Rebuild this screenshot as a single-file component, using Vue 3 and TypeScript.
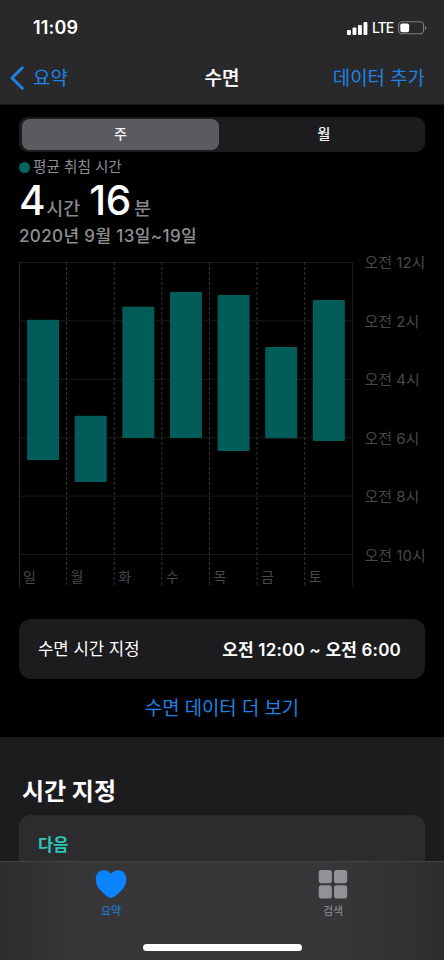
<script setup lang="ts">
interface SleepBar {
  day: string
  top: number
  bottom: number
}

const PITCH = 47.62
const ROW = 58.4

const bars: SleepBar[] = [
  { day: '일', top: 57.7, bottom: 198 },
  { day: '월', top: 153.7, bottom: 220 },
  { day: '화', top: 44.8, bottom: 176 },
  { day: '수', top: 30, bottom: 176 },
  { day: '목', top: 33, bottom: 189 },
  { day: '금', top: 85, bottom: 176.3 },
  { day: '토', top: 38, bottom: 179 },
]

const hours: string[] = ['12', '2', '4', '6', '8', '10']
const dividers: number[] = [1, 2, 3, 4, 5, 6]
const signal: number[] = [5, 7.5, 10, 13]
</script>

<template>
  <div class="screen">
    <header class="header">
      <div class="status">
        <span class="clock">11:09</span>
        <div class="indicators">
          <svg class="signal" viewBox="0 0 21 13">
            <rect v-for="(h, i) in signal" :key="i" :x="i * 5.5" :y="13 - h" width="3.9" :height="h" rx="1" />
          </svg>
          <span class="network">LTE</span>
          <svg class="battery" viewBox="0 0 30 14">
            <rect x="0.6" y="0.8" width="25" height="12" rx="3.6" class="battery-shell" />
            <rect x="2.3" y="2.5" width="8.8" height="8.8" rx="1.8" class="battery-level" />
            <path d="M27 4.7 C28.9 5.5 28.9 8.1 27 8.9 Z" class="battery-cap" />
          </svg>
        </div>
      </div>
      <nav class="nav">
        <a class="back">
          <svg class="chevron" viewBox="0 0 14 24"><path d="M12.3 1.8 L2 12 L12.3 22.2" /></svg>
          <span>요약</span>
        </a>
        <h1 class="nav-title">수면</h1>
        <a class="add">데이터 추가</a>
      </nav>
    </header>

    <main class="content">
      <div class="segments">
        <button class="segment selected">주</button>
        <button class="segment">월</button>
      </div>

      <section class="summary">
        <div class="legend"><i class="dot"></i><span>평균 취침 시간</span></div>
        <div class="duration">
          <b class="num hours">4</b><span class="unit">시간</span>
          <b class="num minutes">16</b><span class="unit last">분</span>
        </div>
        <div class="range">2020년 9월 13일~19일</div>
      </section>

      <section class="chart">
        <div class="plot">
          <svg class="grid" viewBox="0 0 334 325">
            <path v-for="(h, i) in hours" :key="h" :d="`M0 ${i * ROW + 0.5} H333.5`" class="rule" />
            <path d="M0.5 0 V325" class="edge" />
            <path d="M333.5 0 V325" class="rule" />
            <path v-for="n in dividers" :key="n" :d="`M${n * PITCH} 0 V325`" class="dash" />
            <rect v-for="(b, i) in bars" :key="b.day" :x="i * PITCH + 8.1" :y="b.top" width="32" :height="b.bottom - b.top" rx="0.8" class="bar" />
          </svg>
          <div class="days">
            <span v-for="b in bars" :key="b.day">{{ b.day }}</span>
          </div>
        </div>
        <div class="axis">
          <span v-for="h in hours" :key="h">오전 {{ h }}시</span>
        </div>
      </section>

      <div class="schedule">
        <span class="schedule-name">수면 시간 지정</span>
        <span class="schedule-time">오전 12:00 ~ 오전 6:00</span>
      </div>
      <a class="more">수면 데이터 더 보기</a>
    </main>

    <section class="planner">
      <h2 class="planner-title">시간 지정</h2>
      <div class="next">다음</div>
    </section>

    <footer class="tabbar">
      <div class="tabs">
        <a class="tab active">
          <svg class="tab-icon" viewBox="0 0 32 29">
            <path d="M16 28 C14.8 28 12.8 26.7 10.5 24.9 C5 20.6 0.7 16.2 0.7 9.6 C0.7 4 4 0.2 8.7 0.2 C12 0.2 14.4 1.5 16 4 C17.6 1.5 20 0.2 23.3 0.2 C28 0.2 31.3 4 31.3 9.6 C31.3 16.2 27 20.6 21.5 24.9 C19.2 26.7 17.2 28 16 28 Z" />
          </svg>
          <span>요약</span>
        </a>
        <a class="tab">
          <svg class="tab-icon" viewBox="0 0 32 29">
            <rect x="1.7" y="0" width="13.2" height="13.2" rx="2.8" />
            <rect x="17" y="0" width="13.2" height="13.2" rx="2.8" />
            <rect x="1.7" y="15.3" width="13.2" height="13.2" rx="2.8" />
            <rect x="17" y="15.3" width="13.2" height="13.2" rx="2.8" />
          </svg>
          <span>검색</span>
        </a>
      </div>
      <div class="home"></div>
    </footer>
  </div>
</template>

<style>
body {
  background: #000;
}
</style>

<style scoped>
.screen {
  width: 444px;
  height: 960px;
  display: flex;
  flex-direction: column;
  overflow: hidden;
  background: #000;
  color: #fff;
  font-family: Inter, 'Noto Sans CJK KR', sans-serif;
  white-space: nowrap;
}
svg {
  display: block;
  flex: none;
}
.header {
  height: 105px;
  flex: none;
  box-sizing: border-box;
  background: #29292b;
  border-bottom: 1px solid #171719;
}
.status {
  height: 54px;
  box-sizing: border-box;
  padding: 2px 16px 0 33px;
  display: flex;
  justify-content: space-between;
  align-items: center;
}
.clock {
  font-size: 18px;
  line-height: 22px;
  font-weight: 600;
  letter-spacing: 0.15px;
}
.indicators {
  display: flex;
  align-items: center;
}
.signal {
  width: 21px;
  height: 13px;
  fill: #fff;
}
.network {
  margin: 0 5px 0 4px;
  font-size: 14px;
  line-height: 20px;
  font-weight: 500;
  letter-spacing: -1.1px;
}
.battery {
  width: 30px;
  height: 14px;
}
.battery-shell {
  fill: none;
  stroke: #7e7e80;
  stroke-width: 1.1;
}
.battery-level {
  fill: #fff;
}
.battery-cap {
  fill: #7e7e80;
}
.nav {
  height: 50px;
  display: grid;
  grid-template-columns: 1fr auto 1fr;
  align-items: center;
  padding: 0 19px 0 10px;
  font-size: 18.9px;
  line-height: 28px;
  color: #1f82e6;
}
.back {
  display: flex;
  align-items: center;
  gap: 9px;
}
.chevron {
  width: 14px;
  height: 24px;
  margin-bottom: 2px;
  fill: none;
  stroke: #1f82e6;
  stroke-width: 2.9;
  stroke-linecap: round;
  stroke-linejoin: round;
}
.nav-title {
  margin: 0;
  padding-left: 9px;
  color: #fff;
  font-size: 19px;
  font-weight: 500;
  -webkit-text-stroke: 0.2px #fff;
}
.add {
  text-align: right;
}
.content {
  height: 632px;
  flex: none;
  box-sizing: border-box;
  padding: 12px 19px 0 19px;
}
.segments {
  height: 35px;
  box-sizing: border-box;
  padding: 2px 0 2px 3px;
  display: grid;
  grid-template-columns: 197px 1fr;
  background: #1c1c1f;
  border-radius: 9px;
}
.segment {
  margin: 0;
  padding: 0 0 2px 4px;
  border: 0;
  border-radius: 7.5px;
  background: none;
  color: #f4f4f4;
  font: 500 14px/29px Inter, 'Noto Sans CJK KR', sans-serif;
}
.selected {
  padding-left: 0;
  background: #5b5a5f;
}
.legend {
  display: flex;
  align-items: center;
  gap: 3px;
  height: 24px;
  margin-top: 3px;
  color: #8d8d92;
  font-size: 14.6px;
}
.legend span {
  line-height: 22px;
}
.dot {
  width: 11px;
  height: 11px;
  border-radius: 50%;
  background: #046460;
}
.duration {
  display: flex;
  align-items: baseline;
  height: 44px;
  line-height: 44px;
}
.num {
  font-size: 40.5px;
  font-weight: 500;
  letter-spacing: -0.3px;
}
.minutes {
  margin-left: 9px;
}
.unit {
  margin-left: 1px;
  color: #86868b;
  font-size: 18.5px;
  font-weight: 500;
}
.last {
  margin-left: 3px;
}
.range {
  height: 26px;
  line-height: 26px;
  color: #909095;
  font-size: 17px;
  font-weight: 500;
  letter-spacing: 0.38px;
}
.chart {
  display: flex;
  margin-top: 13px;
  height: 325px;
}
.plot {
  width: 334px;
  height: 325px;
  display: grid;
}
.grid,
.days {
  grid-area: 1 / 1;
}
.grid {
  width: 334px;
  height: 325px;
}
.rule {
  stroke: #19191a;
  stroke-width: 1;
}
.edge {
  stroke: #2a2a2b;
  stroke-width: 1;
}
.dash {
  stroke: #343435;
  stroke-width: 1;
  stroke-dasharray: 3 2;
}
.bar {
  fill: #025c59;
}
.days {
  align-self: end;
  display: grid;
  grid-template-columns: repeat(7, 47.62px);
  height: 20px;
  line-height: 20px;
  color: #48484a;
  font-size: 14px;
}
.days span {
  padding-left: 4px;
}
.axis {
  margin-top: -10px;
  padding-left: 11.5px;
  color: #48484b;
  font-size: 15px;
}
.axis span {
  display: block;
  height: 58.5px;
  line-height: 22px;
}
.schedule {
  display: flex;
  align-items: center;
  justify-content: space-between;
  height: 60px;
  box-sizing: border-box;
  width: 406px;
  margin-top: 32px;
  padding: 0 24px 2px 19px;
  border-radius: 12px;
  background: #1c1c1e;
  font-size: 16.7px;
}
.schedule-time {
  font-size: 17px;
  font-weight: 600;
  letter-spacing: 0.18px;
}
.more {
  display: block;
  height: 58px;
  line-height: 60px;
  color: #1f82e6;
  font-size: 18.8px;
  text-align: center;
}
.planner {
  height: 124px;
  flex: none;
  box-sizing: border-box;
  padding: 34px 19px 0;
  background: #1c1c1e;
  overflow: hidden;
}
.planner-title {
  margin: 0 0 0 3px;
  height: 44px;
  line-height: 42px;
  font-size: 24px;
  font-weight: 700;
}
.next {
  width: 406px;
  height: 70px;
  box-sizing: border-box;
  padding: 15px 19px;
  border-radius: 12px;
  background: #2c2c2e;
  color: #2cc6bb;
  font-size: 16.5px;
  line-height: 30px;
  font-weight: 700;
}
.tabbar {
  height: 99px;
  flex: none;
  box-sizing: border-box;
  border-top: 1px solid #434345;
  background: linear-gradient(90deg, #2d2d2e 0, #373739 80px, #373739 330px, #2e2e2e 444px);
}
.tabs {
  display: grid;
  grid-template-columns: 222px 222px;
  height: 82px;
}
.tab {
  display: flex;
  flex-direction: column;
  align-items: center;
  padding-top: 8px;
  color: #929296;
  font-size: 11px;
  line-height: 22px;
}
.tab-icon {
  width: 32px;
  height: 29px;
  margin-bottom: 1px;
  fill: #929296;
}
.active {
  color: #1f82e6;
}
.active .tab-icon {
  fill: #0a84ff;
}
.home {
  width: 159px;
  height: 6.5px;
  margin: 0 auto;
  border-radius: 4px;
  background: #fff;
}
</style>
